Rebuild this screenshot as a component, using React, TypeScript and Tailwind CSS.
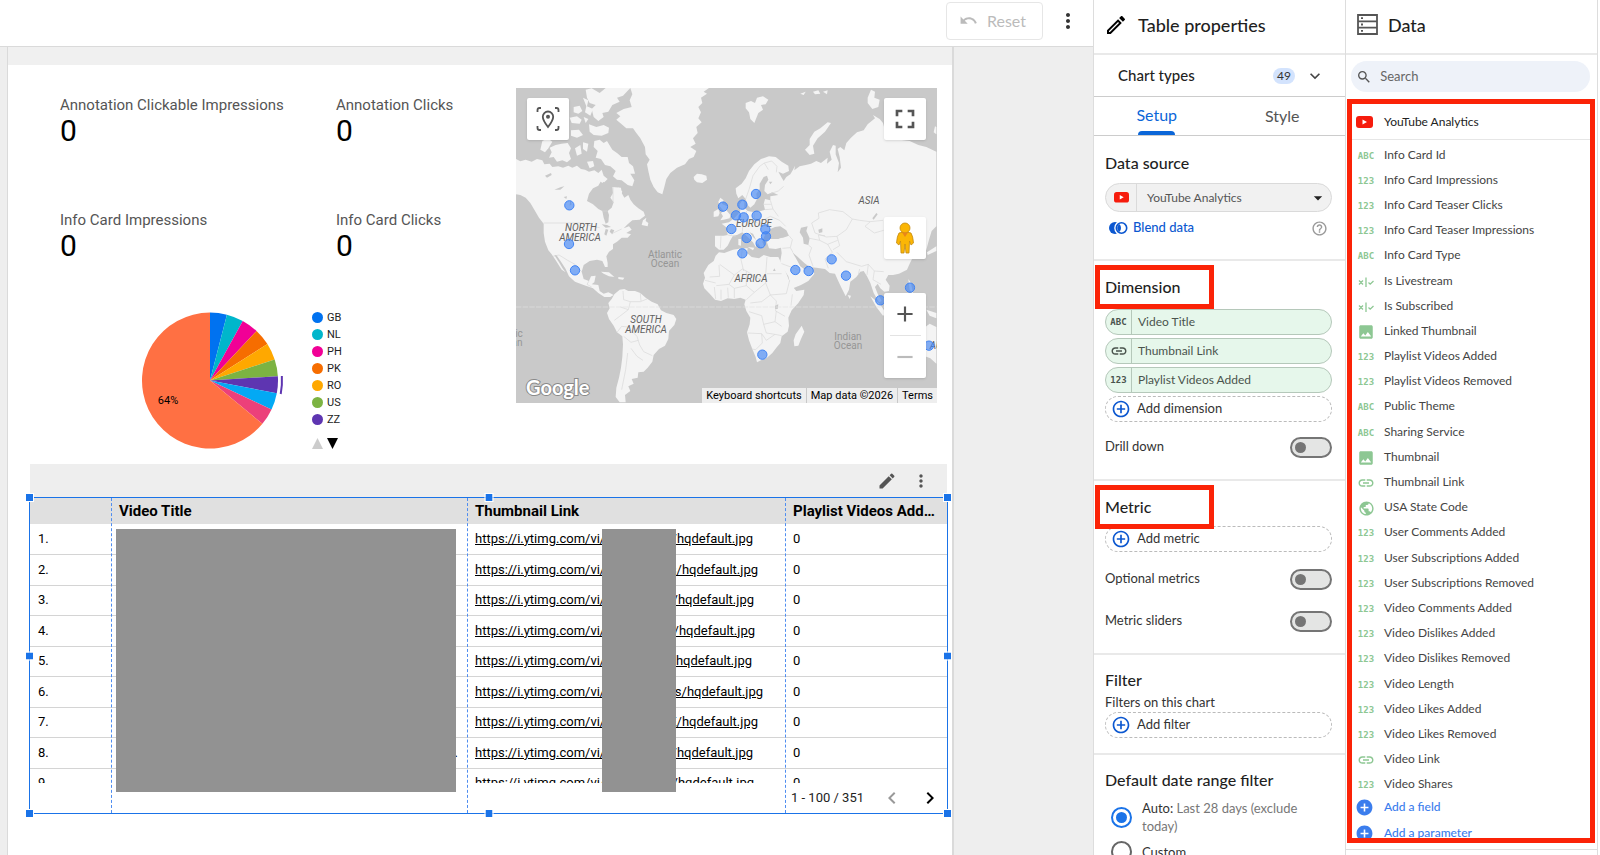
import type { ReactNode } from 'react';
import {
  MdAdd,
  MdAddCircle,
  MdAddCircleOutline,
  MdArrowDropDown,
  MdChevronLeft,
  MdChevronRight,
  MdEdit,
  MdExpandMore,
  MdFullscreen,
  MdHelpOutline,
  MdImage,
  MdLink,
  MdMoreVert,
  MdOutlineEdit,
  MdPublic,
  MdRemove,
  MdSearch,
  MdUndo,
} from 'react-icons/md';

type FieldType = 'text' | 'number' | 'boolean' | 'image' | 'link' | 'geo';

const fields: { name: string; type: FieldType }[] = [
  { name: 'Info Card Id', type: 'text' },
  { name: 'Info Card Impressions', type: 'number' },
  { name: 'Info Card Teaser Clicks', type: 'number' },
  { name: 'Info Card Teaser Impressions', type: 'number' },
  { name: 'Info Card Type', type: 'text' },
  { name: 'Is Livestream', type: 'boolean' },
  { name: 'Is Subscribed', type: 'boolean' },
  { name: 'Linked Thumbnail', type: 'image' },
  { name: 'Playlist Videos Added', type: 'number' },
  { name: 'Playlist Videos Removed', type: 'number' },
  { name: 'Public Theme', type: 'text' },
  { name: 'Sharing Service', type: 'text' },
  { name: 'Thumbnail', type: 'image' },
  { name: 'Thumbnail Link', type: 'link' },
  { name: 'USA State Code', type: 'geo' },
  { name: 'User Comments Added', type: 'number' },
  { name: 'User Subscriptions Added', type: 'number' },
  { name: 'User Subscriptions Removed', type: 'number' },
  { name: 'Video Comments Added', type: 'number' },
  { name: 'Video Dislikes Added', type: 'number' },
  { name: 'Video Dislikes Removed', type: 'number' },
  { name: 'Video Length', type: 'number' },
  { name: 'Video Likes Added', type: 'number' },
  { name: 'Video Likes Removed', type: 'number' },
  { name: 'Video Link', type: 'link' },
  { name: 'Video Shares', type: 'number' },
];

const scorecards = [
  'Annotation Clickable Impressions',
  'Annotation Clicks',
  'Info Card Impressions',
  'Info Card Clicks',
];

const slices = [
  { label: 'GB', value: 4, color: '#0072f0' },
  { label: 'NL', value: 4, color: '#00b6cb' },
  { label: 'PH', value: 4, color: '#f10096' },
  { label: 'PK', value: 4, color: '#f66d00' },
  { label: 'RO', value: 4, color: '#ffa800' },
  { label: 'US', value: 4, color: '#7cb342' },
  { label: 'ZZ', value: 4, color: '#5e35b1' },
  { label: '', value: 4, color: '#03a9f4' },
  { label: '', value: 4, color: '#ec407a' },
  { label: '', value: 64, color: '#ff7043' },
];

// tail is what is readable after the redacted id, width is the link's full length
const links = [
  { tail: '/hqdefault.jpg', width: 278 },
  { tail: 's/hqdefault.jpg', width: 283 },
  { tail: '/hqdefault.jpg', width: 279 },
  { tail: '/hqdefault.jpg', width: 280 },
  { tail: '/hqdefault.jpg', width: 277 },
  { tail: 'gs/hqdefault.jpg', width: 288 },
  { tail: 'E/hqdefault.jpg', width: 283 },
  { tail: '/hqdefault.jpg', width: 278 },
  { tail: '/hqdefault.jpg', width: 279 },
];

const pins = [
  [209, 407], [208, 523], [226, 602], [670, 411], [728, 405], [769, 373], [709, 437], [732, 443],
  [771, 438], [695, 478], [797, 479], [799, 500], [783, 521], [741, 505], [728, 551], [887, 601],
  [927, 604], [996, 569], [1039, 618], [1231, 654], [1142, 692], [788, 855], [1288, 828],
];

const land = [
  // North and Central America
  'M49 268L62 275L78 270L96 276L112 268L128 272L134 284L150 282L158 292L176 290L190 294L206 288L218 294L232 288L244 298L256 300L268 306L284 302L296 310L306 300L312 318L324 328L314 338L304 334L296 348L280 356L268 372L262 394L280 404L296 418L308 424L312 444L318 462L326 458L328 436L324 424L336 414L342 398L332 384L340 370L338 352L364 354L366 370L374 384L386 376L392 390L402 404L416 416L432 426L436 438L420 450L398 452L384 464L372 476L388 470L396 480L380 490L394 494L384 504L366 504L352 516L340 524L340 538L328 546L320 560L324 580L324 592L316 592L308 574L292 570L270 574L252 586L246 606L252 628L268 634L274 620L288 618L284 638L276 644L296 646L300 664L312 672L326 668L342 676L332 682L314 682L296 670L280 656L252 646L226 636L208 620L198 598L184 576L170 556L164 556L178 578L190 598L198 608L186 600L168 572L156 554L146 542L136 516L132 490L132 462L118 444L104 420L92 400L78 384L62 376L49 374Z',
  'M426 466L430 452L440 444L438 454L446 460L444 470Z',
  // Arctic islands
  'M284 214L300 210L312 220L322 214L338 240L352 250L366 262L384 262L388 280L400 290L406 312L392 312L404 332L398 350L384 346L366 332L352 330L340 320L348 304L332 290L316 286L304 268L288 264L294 244L282 232Z',
  'M150 234L168 226L186 222L204 220L214 236L208 250L214 268L202 278L188 272L172 276L162 262L148 264L156 248Z',
  'M122 240L128 214L144 206L158 216L146 236L136 248Z',
  'M226 236L242 226L246 252L232 258Z M250 218L266 222L262 246L250 238Z M262 276L280 274L284 290L270 296Z M302 320L318 330L308 340L298 332Z M356 352L368 366L364 374Z',
  'M222 112L240 108L248 124L236 132L222 128Z M210 144L232 140L246 150L240 162L216 160Z M252 142L266 148L258 160Z M214 182L238 180L250 196L232 204L214 198Z',
  'M258 60L276 56L300 70L318 55L392 55L370 78L352 84L360 96L338 106L326 126L308 130L312 142L296 154L282 142L276 118L288 106L270 100L262 84Z',
  'M250 84L266 92L262 110L280 118L272 138L256 128L260 110Z M268 164L290 172L312 166L328 174L326 190L306 198L282 196L270 186Z',
  // Greenland, Iceland, Svalbard
  'M392 55L628 55L612 66L622 72L604 84L608 100L596 112L604 128L596 146L606 158L590 172L594 190L580 206L588 222L572 232L590 244L582 262L568 268L556 284L532 294L512 310L500 328L494 352L488 374L474 368L462 352L452 330L446 304L442 284L450 270L438 254L436 232L422 206L410 190L400 176L380 176L366 164L350 150L362 140L350 130L372 118L396 112L390 92L398 74Z',
  'M582 322L592 312L606 314L620 318L622 330L608 340L592 338L584 330Z',
  'M738 100L754 94L766 100L772 84L790 80L806 90L798 104L784 106L790 120L776 130L764 160L752 148L748 128L738 116Z',
  'M902 72L918 66L912 76Z M940 66L956 62L962 72L946 74Z M970 66L984 62L982 74Z',
  'M1104 84L1114 60L1126 66L1124 84L1140 90L1136 112L1118 118L1104 100Z',
  'M994 160L984 158L962 176L944 186L930 208L930 226L916 240L930 256L944 252L940 228L954 206L976 186Z',
  // British Isles
  'M662 384L672 392L666 402L682 410L680 422L692 436L690 446L672 450L662 452L670 440L664 430L672 424L660 410L656 396Z',
  'M642 426L656 418L660 430L656 440L642 442Z',
  // Europe and Asia
  'M646 498L672 498L684 496L682 474L666 462L688 458L704 446L716 432L722 424L720 404L728 392L734 398L734 414L744 424L764 428L784 424L796 420L792 404L796 388L812 392L812 380L836 376L818 368L804 374L794 364L796 346L806 330L802 318L792 322L780 342L780 358L770 372L772 388L764 404L752 414L744 406L738 388L728 376L716 386L710 372L708 356L726 342L738 326L748 304L764 284L784 268L808 260L828 262L846 276L866 288L868 304L850 312L836 306L846 324L852 334L860 322L872 314L880 300L886 288L884 302L900 290L918 286L934 282L950 274L964 280L984 264L982 282L996 270L990 246L1000 226L1008 228L1008 254L1018 280L1014 308L1024 294L1020 262L1014 238L1022 232L1034 242L1040 220L1054 204L1072 188L1092 182L1104 164L1126 146L1120 136L1140 148L1150 160L1154 176L1170 190L1200 210L1230 214L1256 226L1280 232L1310 246L1310 470L1296 484L1288 510L1280 540L1262 556L1240 562L1230 582L1222 600L1198 612L1180 616L1166 616L1158 630L1170 648L1168 664L1154 666L1142 656L1134 642L1126 652L1134 672L1146 694L1138 698L1122 670L1112 640L1102 620L1092 604L1082 606L1070 622L1052 636L1048 660L1038 680L1026 656L1014 630L1006 612L990 610L976 598L950 594L930 592L914 580L892 560L878 548L888 564L902 590L916 600L928 586L940 600L944 612L926 634L904 646L880 656L872 644L866 620L848 592L842 574L846 550L844 534L828 538L808 536L802 518L806 508L836 508L856 500L848 486L830 480L812 480L800 488L794 500L788 516L794 532L782 532L770 512L760 492L750 488L760 502L776 518L768 532L760 518L742 500L728 488L712 496L700 498L692 512L684 528L672 540L658 540L646 530Z',
  'M744 532L764 534L760 542Z M716 508L724 508L724 528L716 526Z',
  // Africa and Madagascar
  'M658 548L674 550L700 540L728 536L744 536L742 550L756 562L778 566L792 556L812 562L836 562L846 582L858 606L868 632L880 652L890 664L914 660L912 676L896 700L876 722L866 744L868 768L864 786L846 800L842 820L830 834L818 850L802 864L784 872L772 878L768 862L758 838L748 812L742 788L750 764L752 744L740 724L734 704L738 690L722 684L704 688L684 686L664 694L646 690L630 672L614 656L610 642L616 624L612 610L626 586L642 574L648 558Z',
  'M906 768L914 786L904 808L896 828L884 830L882 812L888 794Z',
  // South America
  'M344 674L360 660L374 658L386 664L406 664L422 670L438 684L456 696L474 704L484 722L500 730L522 736L530 748L524 766L508 784L506 808L496 828L478 838L462 856L458 876L444 894L432 906L416 908L414 924L396 928L402 942L386 950L392 964L376 976L378 998L360 998L348 982L350 954L358 924L364 894L368 862L370 824L368 800L352 788L342 768L328 748L322 730L330 716L326 700L336 688Z',
  // Antilles, Asia Pacific, Australia
  'M304 606L328 608L344 622L328 620L312 612Z M356 622L374 624L370 630L356 628Z M1044 676L1054 678L1050 688Z M1226 628L1234 640L1240 672L1230 660Z M1112 680L1140 702L1160 732L1150 738L1130 712Z M1280 720L1310 730L1310 746L1290 738Z M1272 776L1290 762L1310 772L1310 882L1292 866L1276 860L1268 830Z M1306 170L1310 172L1310 194L1302 188Z M1282 548L1310 530L1310 544L1284 556Z',
];

// lakes and inland seas
const water = [
  'M812 478L826 472L842 470L860 482L868 498L850 504L828 504L810 496Z',
  'M904 474L924 470L920 484L930 506L926 526L912 522L910 504L900 488Z',
  'M956 480L968 476L968 488L958 490Z M1118 446L1130 430L1134 434L1122 450Z',
  'M306 464L322 466L334 472L318 474Z M318 478L326 480L320 498L314 494Z M334 478L344 482L338 494L330 486Z',
  'M136 318L154 310L156 316L142 324Z M164 360L184 352L194 350L182 360Z M192 382L202 380L200 388Z M212 390L216 404L210 408Z',
  'M808 336L812 344L818 336Z M824 596L828 604L820 604Z M826 708L836 704L834 718L826 718Z',
];

const borders = [
  'M132 460L250 460L278 470L300 474', 'M308 424L322 424M340 400L340 352',
  'M336 492L366 478', 'M160 560L178 556L204 572L226 584L246 606', 'M268 634L262 644L276 652',
  'M370 664L372 690L392 696L386 720L360 740L344 752', 'M392 696L422 696L442 688M422 670L424 694M386 720L362 712',
  'M352 788L366 770L384 772L412 800L420 826L432 846L458 858', 'M372 800L394 818L416 812M384 850L378 900L366 960M394 836L412 860L430 872',
  'M658 586L660 620L630 622M660 584L704 616L688 644L650 648M704 616L728 598L740 604L778 628L798 616L802 562M728 538L724 570L732 604',
  'M740 604L740 648L764 668L798 640L798 616M798 640L812 676L860 672L870 632M764 668L740 690M688 644L704 656L740 648',
  'M802 612L846 612M812 676L830 694L828 724L856 740M752 700L786 696L812 676M748 726L786 738L792 764L826 756L830 724',
  'M744 790L786 792L800 812L826 794L846 798M786 792L788 820L768 840L756 838M792 764L800 790L826 794M826 756L846 770',
  'M878 674L874 708M644 652L648 688M664 660L664 690M684 654L686 684M704 656L704 686M616 632L648 640',
  'M664 500L662 536M684 496L708 500M714 444L730 458L728 486M740 424L744 450L772 458L784 470M764 428L764 448L790 452',
  'M790 452L812 440L840 452L858 470M784 470L812 466M796 420L820 418L836 440M792 404L814 404M812 392L820 418',
  'M738 388L748 360L760 318L780 290L794 280L806 300M794 280L816 274L832 290L830 308M812 372L836 364L852 350',
  'M848 536L872 534L880 548M872 534L878 510L868 498M930 506L960 512L984 524L998 548L976 568L986 596',
  'M846 582L868 590L896 600M926 526L936 534L928 556L940 590M936 460L958 446L956 430L990 420L1030 426L1058 448L1080 452',
  'M1080 452L1112 456L1150 452M936 460L946 490L980 502L1012 500L1040 480L1058 448M1012 500L1020 528L1000 540M1012 548L1040 576L1086 590',
  'M1086 590L1106 584L1124 604L1152 606M1112 456L1096 470L1124 490L1152 482M1080 598L1076 614M1124 604L1120 630L1144 644',
  'M984 524L1014 512M960 512L956 496L976 498M1106 584L1102 616',
];

const arc = (r: number, angle: number) => {
  const a = ((angle - 90) * Math.PI) / 180;
  return `${(r * Math.cos(a)).toFixed(2)} ${(r * Math.sin(a)).toFixed(2)}`;
};

function BooleanIcon() {
  return (
    <svg className="w-4 h-4" viewBox="0 0 16 16" fill="none" stroke="currentColor">
      <path d="M1 6.500L5 10.500M5 6.500L1 10.500M10.500 8.500L12.200 10.200L15.500 7" strokeWidth="1.300" />
      <path d="M8 3.500V13" strokeWidth="1.300" />
    </svg>
  );
}

function FieldIcon({ type }: { type: FieldType }) {
  if (type === 'text' || type === 'number') {
    return (
      <span aria-hidden="true" className="font-['DejaVu_Sans_Mono',monospace] text-[9px] leading-3 font-bold">
        {type === 'text' ? 'ABC' : '123'}
      </span>
    );
  }
  if (type === 'boolean') return <BooleanIcon />;
  if (type === 'image') return <MdImage size={18} />;
  if (type === 'link') return <MdLink size={18} />;
  return <MdPublic size={17} />;
}

function YouTubeIcon({ className }: { className: string }) {
  return (
    <svg className={className} viewBox="0 0 17 12">
      <rect width="17" height="12" rx="3" fill="#f61c0d" />
      <path d="M6.500 3.500L11 6L6.500 8.500Z" fill="#fff" />
    </svg>
  );
}

function MapChart() {
  return (
    <div className="relative mt-[22px] w-[421px] h-[315px] shrink-0">
      <svg className="block w-full h-full" viewBox="0 0 421 315" role="img" aria-label="Map">
        <rect width="421" height="315" fill="#c9c9c9" />
        <g transform="scale(.33333) translate(-49 -55)">
          {land.map((d) => (
            <path key={d} d={d} fill="#f4f4f4" />
          ))}
          {water.map((d) => (
            <path key={d} d={d} fill="#c9c9c9" />
          ))}
          {borders.map((d) => (
            <path key={d} d={d} fill="none" stroke="#d8d8d8" strokeWidth="2" />
          ))}
          <path d="M49 712H1310" stroke="#e2e2e2" strokeWidth="2" strokeDasharray="16 4" />
        </g>
        <g fontFamily="Roboto, sans-serif" fontSize="10" textAnchor="middle">
          <g fill="#616161" fontStyle="italic">
            <text x="65" y="143">NORTH</text>
            <text x="64" y="153">AMERICA</text>
            <text x="130" y="235">SOUTH</text>
            <text x="130" y="245">AMERICA</text>
            <text x="238" y="139">EUROPE</text>
            <text x="235" y="194">AFRICA</text>
            <text x="353" y="116">ASIA</text>
            <text x="420" y="261">AU</text>
          </g>
          <g fill="#969696">
            <text x="149" y="170">Atlantic</text>
            <text x="149" y="179">Ocean</text>
            <text x="332" y="252">Indian</text>
            <text x="332" y="261">Ocean</text>
            <text x="3" y="249">ic</text>
            <text x="1" y="258">an</text>
          </g>
        </g>
        <g transform="scale(.33333) translate(-49 -55)">
          {pins.map(([x, y]) => (
            <circle key={`${x}-${y}`} cx={x} cy={y} r="14" fill="#4285f4" fillOpacity=".65" stroke="#4285f4" strokeWidth="3" />
          ))}
        </g>
        <text
          x="10"
          y="307"
          fontFamily="Lato, sans-serif"
          fontSize="20"
          fontWeight="700"
          fill="#fff"
          stroke="#8a8a8a"
          strokeWidth="2"
          paintOrder="stroke"
        >
          Google
        </text>
      </svg>
      <button aria-label="Reset view" className="absolute left-[11px] top-[10px] flex w-[42px] h-[42px] items-center justify-center rounded-xs bg-white text-[#555] shadow">
        <svg className="w-6 h-6" viewBox="0 0 24 24" fill="none" stroke="currentColor" strokeWidth="1.800">
          <path d="M1.500 5V3Q1.500 1 3.500 1H5M19 1H20.500Q22.500 1 22.500 3V5M22.500 19V21Q22.500 23 20.500 23H19M5 23H3.500Q1.500 23 1.500 21V19" />
          <path d="M12 20C8.500 15.500 6.800 12.500 6.800 9.700A5.200 5.200 0 0 1 17.200 9.700C17.200 12.500 15.500 15.500 12 20Z" />
          <circle cx="12" cy="9.700" r="2" fill="currentColor" stroke="none" />
        </svg>
      </button>
      <div className="absolute right-[11px] top-[10px] flex flex-col text-[#555]">
        <button aria-label="Fullscreen" className="flex w-[42px] h-[42px] items-center justify-center rounded-xs bg-white shadow">
          <MdFullscreen size={32} />
        </button>
        <button aria-label="Street View" className="mt-[77px] flex w-[42px] h-[42px] items-center justify-center rounded-xs bg-white shadow">
          <svg className="w-5 h-8" viewBox="0 0 20 32" fill="#fbb605" stroke="#c48a12" strokeWidth=".8">
            <path d="M4 11Q10 8.500 16 11Q18 14 18.500 21L16 23L14.500 19L14 31H11L10 22L9 31H6L5.500 19L4 23L1.500 21Q2 14 4 11Z" />
            <circle cx="10" cy="6" r="5" />
            <path d="M7 10.500H13L10 15Z" fill="#e8861a" stroke="none" />
          </svg>
        </button>
        <div className="mt-[34px] flex flex-col items-center rounded-xs bg-white shadow">
          <button aria-label="Zoom in" className="flex w-[42px] h-[42px] items-center justify-center">
            <MdAdd size={26} />
          </button>
          <div className="h-px w-[31px] bg-[#e3e3e3]" />
          <button aria-label="Zoom out" className="flex w-[42px] h-[42px] items-center justify-center text-[#bbb]">
            <MdRemove size={26} />
          </button>
        </div>
      </div>
      <div className="absolute right-0 bottom-0 flex h-[15px] items-center gap-px text-[11px] leading-[15px] text-black">
        <button className="bg-[#f2f2f2]/90 px-1">Keyboard shortcuts</button>
        <span className="bg-[#f2f2f2]/90 px-1">Map data ©2026</span>
        <a href="#terms" className="bg-[#f2f2f2]/90 px-1">Terms</a>
      </div>
    </div>
  );
}

function PieChart() {
  let angle = 0;
  return (
    <div className="mt-[50px] ml-[80px] flex">
      <svg className="w-[146px] h-[137px]" viewBox="-70 -68.500 146 137" role="img" aria-label="Views by country">
        {slices.map((slice) => {
          const start = angle;
          angle += slice.value * 3.6;
          return (
            <path
              key={slice.color}
              d={`M0 0L${arc(68, start)}A68 68 0 ${slice.value > 50 ? 1 : 0} 1 ${arc(68, angle)}Z`}
              fill={slice.color}
            />
          );
        })}
        <path d={`M${arc(72, 86.4)}A72 72 0 0 1 ${arc(72, 100.8)}`} fill="none" stroke="#5e35b1" strokeWidth="2" />
        <text x="-42" y="23" textAnchor="middle" fontFamily="Roboto, sans-serif" fontSize="11">64%</text>
      </svg>
      <div className="ml-[26px] -mt-[3px] text-[11px]">
        <ul>
          {slices.filter((slice) => slice.label).map((slice) => (
            <li key={slice.label} className="flex h-[17px] items-center gap-1">
              <span className="w-[11px] h-[11px] rounded-full" style={{ backgroundColor: slice.color }} />
              <span className="leading-[17px] text-[#222]">{slice.label}</span>
            </li>
          ))}
        </ul>
        <div className="mt-[10px] flex gap-1">
          <button aria-label="Previous legend page">
            <svg className="w-[11px] h-[11px]" viewBox="0 0 10 10"><path d="M0 10L5 0L10 10Z" fill="#ccc" /></svg>
          </button>
          <button aria-label="Next legend page">
            <svg className="w-[11px] h-[11px]" viewBox="0 0 10 10"><path d="M0 0L5 10L10 0Z" fill="#000" /></svg>
          </button>
        </div>
      </div>
    </div>
  );
}

const handles = [
  'left-[-4px] top-[-4px]',
  'left-1/2 top-[-4px] -translate-x-1/2',
  'right-[-4px] top-[-4px]',
  'left-[-4px] top-1/2 -translate-y-1/2',
  'right-[-4px] top-1/2 -translate-y-1/2',
  'left-[-4px] bottom-[-4px]',
  'left-1/2 bottom-[-4px] -translate-x-1/2',
  'right-[-4px] bottom-[-4px]',
];

function VideoTable() {
  return (
    <div className="ml-[21px] mr-1">
      <div className="ml-px mr-px flex h-[33px] items-center justify-end gap-[14px] bg-[#eee] pr-4 text-[#555]">
        <button aria-label="Edit chart"><MdEdit size={20} /></button>
        <button aria-label="Chart menu"><MdMoreVert size={20} /></button>
      </div>
      <div className="relative flex h-[317px] flex-col border border-[#1a73e8]">
        <div className="h-[285px] overflow-hidden">
          <table className="w-full table-fixed border-collapse text-left text-[13px]">
            <colgroup>
              <col className="w-[82px]" />
              <col className="w-[356px]" />
              <col className="w-[318px]" />
              <col />
            </colgroup>
            <thead>
              <tr className="h-[26px] bg-[#e0e0e0] text-[15px] leading-5">
                <th aria-label="Row" />
                <th className="pl-[7px]">Video Title</th>
                <th className="pl-[7px]">Thumbnail Link</th>
                <th className="truncate pl-[7px] pr-3">Playlist Videos Added</th>
              </tr>
            </thead>
            <tbody>
              {links.map((link, i) => (
                <tr key={i} className="h-[31px] odd:h-[30px] border-b border-[#d4d4d4] leading-5">
                  <td className="pl-2">{i + 1}.</td>
                  <td className="pr-[10px] text-right">{i === 7 ? '.' : ''}</td>
                  <td className="pl-[7px]">
                    <a href="#thumbnail" className="flex justify-between underline" style={{ width: link.width }}>
                      <span>https://i.ytimg.com/vi/</span>
                      <span>{link.tail}</span>
                    </a>
                  </td>
                  <td className="pl-[7px]">0</td>
                </tr>
              ))}
            </tbody>
          </table>
        </div>
        <div className="flex flex-1 items-center justify-end pr-[5px] text-[13px] text-[#222]">
          <span>1 - 100 / 351</span>
          <button aria-label="Previous page" className="ml-4 text-[#999]"><MdChevronLeft size={24} /></button>
          <button aria-label="Next page" className="ml-[14px] text-black"><MdChevronRight size={24} /></button>
        </div>
        {/* column guides */}
        <div className="pointer-events-none absolute inset-0 flex">
          <div className="w-[82px] border-r border-dashed border-[#4f8df0]" />
          <div className="w-[356px] border-r border-dashed border-[#4f8df0]" />
          <div className="w-[318px] border-r border-dashed border-[#4f8df0]" />
        </div>
        {/* redacted values */}
        <div className="absolute left-[86px] top-[31px] w-[340px] h-[263px] bg-[#929292]" />
        <div className="absolute left-[572px] top-[31px] w-[74px] h-[263px] bg-[#929292]" />
        {handles.map((position) => (
          <span key={position} className={`absolute w-[7px] h-[7px] bg-[#1a73e8] outline outline-white ${position}`} />
        ))}
      </div>
    </div>
  );
}

function Report() {
  return (
    <main className="flex min-h-0 flex-1 overflow-hidden bg-[#eee] pl-[7px] pr-[139px] font-[Roboto,sans-serif]">
      <div className="flex-1 border-l border-r-2 border-[#dadada] bg-white">
        <div className="h-[18px] bg-[#f0f0f0]" />
        <div className="flex h-[399px] justify-between pl-[52px] pr-[15px] pt-px">
          <div>
            <div className="mt-[29px] grid grid-cols-[276px_1fr] gap-y-[63px]">
              {scorecards.map((label) => (
                <div key={label}>
                  <div className="text-[15px] leading-5 text-[#555]">{label}</div>
                  <div className="text-[30px] leading-8 text-black">0</div>
                </div>
              ))}
            </div>
            <PieChart />
          </div>
          <MapChart />
        </div>
        <VideoTable />
      </div>
    </main>
  );
}

function Section({ children, className }: { children: ReactNode; className: string }) {
  return <section className={`border-t-2 border-[#e9e9e9] pl-[11px] pr-[13px] ${className}`}>{children}</section>;
}

function Toggle({ label }: { label: string }) {
  return (
    <label className="flex h-[42px] items-center justify-between text-[13px] text-[#333]">
      {label}
      <input
        type="checkbox"
        role="switch"
        className="w-[42px] h-[21px] appearance-none rounded-full border-2 border-[#757575] bg-[#e4e5e4] before:mt-[3px] before:ml-[3px] before:block before:w-[11px] before:h-[11px] before:rounded-full before:bg-[#757575] checked:bg-[#0b57d0]"
      />
    </label>
  );
}

function FieldChip({ type, name }: { type: FieldType; name: string }) {
  return (
    <button className="flex h-[26px] w-full items-center rounded-full border border-[#b5c8ba] bg-[#e6f7eb] text-left text-xs text-[#4a544d]">
      <span className="flex h-full w-[26px] items-center justify-center border-r border-[#b5c8ba]">
        <FieldIcon type={type} />
      </span>
      <span className="pl-[6px]">{name}</span>
    </button>
  );
}

function AddButton({ label }: { label: string }) {
  return (
    <button className="flex h-[26px] w-full items-center gap-[6px] rounded-full border border-dashed border-[#bbb] pl-[5px] text-[13px] text-[#333]">
      <MdAddCircleOutline size={20} className="text-[#0b57d0]" />
      {label}
    </button>
  );
}

// red frame drawn round a heading
function Highlight({ children }: { children: ReactNode }) {
  return (
    <div className="relative z-10 -ml-[10px] flex h-[44px] w-[119px] items-center border-[5px] border-[#fb2307] bg-white pl-[5px]">
      {children}
    </div>
  );
}

const heading = 'text-base font-medium text-[#1f1f1f]';

function PropertiesPanel() {
  return (
    <aside className="flex w-[252px] shrink-0 flex-col overflow-hidden border-l border-[#ddd] bg-white">
      <div className="flex h-[53px] shrink-0 items-center gap-[10px] pb-[3px] pl-[10px]">
        <MdOutlineEdit size={24} />
        <h2 className="text-lg font-medium text-[#1f1f1f]">Table properties</h2>
      </div>
      <button className="flex h-[43px] shrink-0 items-center border-t-2 border-[#e9e9e9] pl-6 pr-5">
        <span className="flex-1 text-left text-[15px] font-medium text-[#1f1f1f]">Chart types</span>
        <span className="rounded-full bg-[#d3e3fd] px-1 text-xs leading-4 text-[#333]">49</span>
        <MdExpandMore size={20} className="ml-[10px] text-[#444]" />
      </button>
      <div role="tablist" className="flex h-[40px] shrink-0 border-y border-[#ccc] text-base">
        <button role="tab" aria-selected="true" className="flex flex-1 flex-col items-center justify-end text-[#0b66d8]">
          <span className="mb-[6px] leading-5">Setup</span>
          <span className="h-1 w-[37px] rounded-t bg-[#0b66d8]" />
        </button>
        <button role="tab" aria-selected="false" className="flex-1 text-[#555]">Style</button>
      </div>

      <section className="h-[123px] shrink-0 pl-[11px] pr-[13px] pt-4">
        <h3 className={`${heading} leading-[21px]`}>Data source</h3>
        <button className="mt-[10px] flex h-[29px] w-full items-center rounded-full border border-[#dadada] bg-[#f1f1f1] text-xs text-[#555]">
          <span className="flex h-full w-[31px] items-center justify-center border-r border-[#dadada]">
            <YouTubeIcon className="w-[15px]" />
          </span>
          <span className="flex-1 pl-[10px] text-left">YouTube Analytics</span>
          <MdArrowDropDown size={20} className="mr-[3px] text-[#222]" />
        </button>
        <div className="mt-[6px] flex h-5 items-center justify-between">
          <button className="flex items-center gap-[5px] pl-1 text-[13px] font-medium text-[#0b57d0]">
            <svg className="w-[19px] h-3" viewBox="0 0 19 12" fill="none" stroke="currentColor">
              <circle cx="6" cy="6" r="6" fill="currentColor" stroke="none" />
              <circle cx="12.500" cy="6" r="5.800" stroke="#fff" strokeWidth="3" />
              <circle cx="12.500" cy="6" r="5.200" strokeWidth="1.600" />
            </svg>
            Blend data
          </button>
          <button aria-label="Help" className="mr-1 text-[#999]"><MdHelpOutline size={17} /></button>
        </div>
      </section>

      <Section className="h-[220px] shrink-0 pt-1">
        <Highlight><h3 className={heading}>Dimension</h3></Highlight>
        <div className="flex flex-col gap-[3px]">
          <FieldChip type="text" name="Video Title" />
          <FieldChip type="link" name="Thumbnail Link" />
          <FieldChip type="number" name="Playlist Videos Added" />
          <AddButton label="Add dimension" />
        </div>
        <div className="mt-1"><Toggle label="Drill down" /></div>
      </Section>

      <Section className="h-[174px] shrink-0 pt-1">
        <Highlight><h3 className={heading}>Metric</h3></Highlight>
        <div className="-mt-[3px]"><AddButton label="Add metric" /></div>
        <div className="mt-[6px]">
          <Toggle label="Optional metrics" />
          <Toggle label="Metric sliders" />
        </div>
      </Section>

      <Section className="h-[100px] shrink-0 pt-[15px]">
        <h3 className={`${heading} leading-5`}>Filter</h3>
        <p className="mt-[3px] text-[13px] leading-[19px] text-[#333]">Filters on this chart</p>
        <AddButton label="Add filter" />
      </Section>

      <Section className="shrink-0 pt-[15px]">
        <h3 className={`${heading} leading-5`}>Default date range filter</h3>
        <label className="mt-[9px] flex items-center gap-[10px] pl-[6px] text-[13px] leading-[18px] text-[#777]">
          <input type="radio" name="range" defaultChecked className="w-[21px] h-[21px] shrink-0 appearance-none rounded-full border-2 border-[#1a73e8] bg-[#1a73e8] bg-clip-content p-[3px]" />
          <span><span className="text-[#333]">Auto:</span> Last 28 days (exclude today)</span>
        </label>
        <label className="mt-[6px] flex items-center gap-[10px] pl-[6px] text-[13px] leading-[18px] text-[#333]">
          <input type="radio" name="range" className="w-[21px] h-[21px] shrink-0 appearance-none rounded-full border-2 border-[#666] checked:bg-[#1a73e8]" />
          Custom
        </label>
      </Section>
    </aside>
  );
}

function DataPanel() {
  return (
    <aside className="mr-[2px] flex w-[253px] shrink-0 flex-col overflow-hidden border-x border-[#ddd] bg-white">
      <div className="flex h-[55px] shrink-0 items-center gap-[10px] border-b-2 border-[#e9e9e9] pb-1 pl-[11px]">
        <svg className="w-[21px] h-[21px]" viewBox="0 0 21 21" fill="none" stroke="#555" strokeWidth="1.800">
          <path d="M1 1H20V20H1ZM1 7.300H20M1 13.700H20" />
          <path d="M4 4.200H6M4 10.500H6M4 16.800H6" />
        </svg>
        <h2 className="text-lg font-medium text-[#1f1f1f]">Data</h2>
      </div>
      <label className="ml-[5px] mr-[7px] mt-[6px] flex h-[31px] shrink-0 items-center gap-2 rounded-full bg-[#eef2f9] pl-[5px] text-[#555]">
        <MdSearch size={18} />
        <input type="search" placeholder="Search" aria-label="Search" className="w-full bg-transparent text-[13px] outline-none placeholder:text-[#666]" />
      </label>
      <div className="mt-[7px] mr-[2px] ml-px flex min-h-0 flex-1 flex-col overflow-hidden border-[5px] border-[#fb2307]">
        <div className="flex h-9 shrink-0 items-center gap-[11px] border-b border-[#e6e6e6] pl-1 text-xs text-[#222]">
          <YouTubeIcon className="w-[17px]" />
          YouTube Analytics
        </div>
        <ul className="mt-[2px] flex h-[655px] shrink-0 flex-col">
          {fields.map((field) => (
            <li key={field.name} className="flex flex-1 items-center pl-1 text-xs text-[#444]">
              <span className="flex w-5 justify-center pt-[2px] text-[#8dc793]">
                <FieldIcon type={field.type} />
              </span>
              <span className="pl-2">{field.name}</span>
            </li>
          ))}
        </ul>
        <button className="flex h-[26px] shrink-0 items-center gap-[10px] pb-[6px] pl-[3px] text-xs font-medium text-[#3b7ded]">
          <MdAddCircle size={19} />
          Add a field
        </button>
        <button className="flex h-[26px] shrink-0 items-center gap-[10px] pb-[6px] pl-[3px] text-xs font-medium text-[#3b7ded]">
          <MdAddCircle size={19} />
          Add a parameter
        </button>
      </div>
      <div className="mt-[6px] h-[6px] shrink-0 border-t border-[#ddd]" />
    </aside>
  );
}

export default function App() {
  return (
    <div className="flex h-screen overflow-hidden bg-white font-[Lato,sans-serif]">
      <div className="flex min-w-0 flex-1 flex-col">
        <header className="flex h-[47px] shrink-0 items-center justify-end border-b border-[#dadada] pb-[5px] pr-[13px]">
          <button className="flex h-[38px] items-center gap-[9px] rounded border border-[#e6e6e6] pl-3 pr-4 text-base text-[#bbb]">
            <MdUndo size={19} />
            Reset
          </button>
          <button aria-label="More options" className="ml-[13px] text-[#333]"><MdMoreVert size={24} /></button>
        </header>
        <Report />
      </div>
      <PropertiesPanel />
      <DataPanel />
    </div>
  );
}
